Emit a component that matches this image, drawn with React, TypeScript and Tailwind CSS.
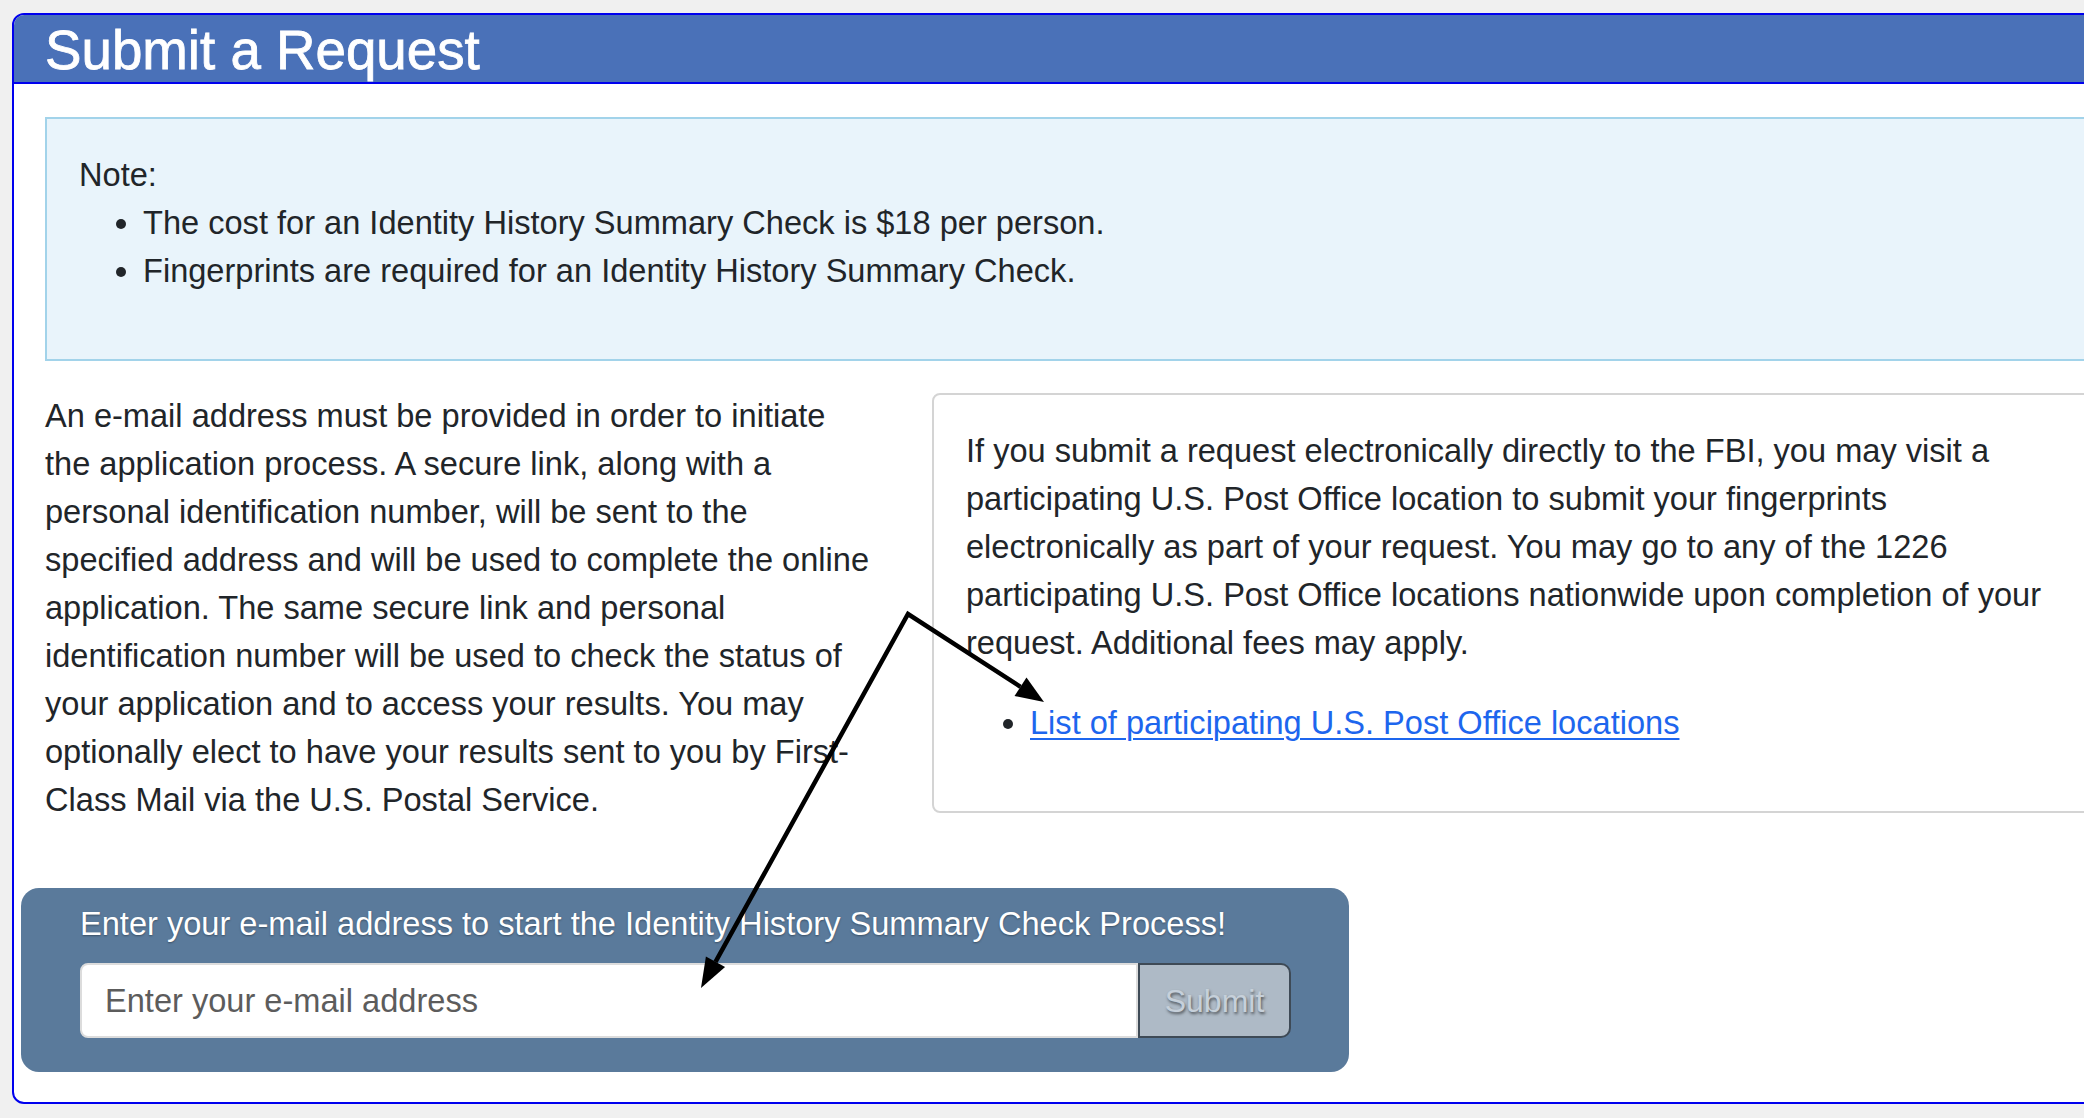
import React from "react";

const leftLines = [
  "An e-mail address must be provided in order to initiate",
  "the application process. A secure link, along with a",
  "personal identification number, will be sent to the",
  "specified address and will be used to complete the online",
  "application. The same secure link and personal",
  "identification number will be used to check the status of",
  "your application and to access your results. You may",
  "optionally elect to have your results sent to you by First-",
  "Class Mail via the U.S. Postal Service.",
];

const cardLines = [
  "If you submit a request electronically directly to the FBI, you may visit a",
  "participating U.S. Post Office location to submit your fingerprints",
  "electronically as part of your request. You may go to any of the 1226",
  "participating U.S. Post Office locations nationwide upon completion of your",
  "request. Additional fees may apply.",
];

export default function App() {
  return (
    <div className="relative w-[2084px] h-[1118px] overflow-hidden bg-[#f0f0f0] font-['Liberation_Sans',Arial,sans-serif] text-[#212529]">
      <div className="ml-[12px] mt-[13px] w-[2300px] border-2 border-[#0000ee] rounded-[12px] overflow-hidden bg-white">
        <div className="bg-[#4a71b8] border-b-2 border-[#0000ee] pl-[31px] pt-[8px] pb-[5px]">
          <h1 className="text-[54.7px] leading-[54px] text-white [-webkit-text-stroke:0.8px_#ffffff]">
            Submit a Request
          </h1>
        </div>
        <div className="pl-[31px] pt-[33px] pb-[30px]">
          <div className="border-2 border-[#a2d3ea] bg-[#e9f4fb] p-[32px] text-[32.6px] leading-[48px]">
            <div>Note:</div>
            <ul className="list-disc pl-[64px] mb-[32px]">
              <li>The cost for an Identity History Summary Check is $18 per person.</li>
              <li>Fingerprints are required for an Identity History Summary Check.</li>
            </ul>
          </div>
          <div className="flex mt-[31px]">
            <div className="w-[887px] shrink-0 text-[32.6px] leading-[48px]">
              {leftLines.map((l, i) => (
                <div key={i} className="whitespace-nowrap">{l}</div>
              ))}
            </div>
            <div className="mt-[1px] w-[1300px] shrink-0 self-start border-2 border-[#d4d4d4] rounded-[8px] p-[32px] text-[32.6px] leading-[48px]">
              <div className="mb-[32px]">
                {cardLines.map((l, i) => (
                  <div key={i} className="whitespace-nowrap">{l}</div>
                ))}
              </div>
              <ul className="list-disc pl-[64px] mb-[32px]">
                <li>
                  <a href="#" className="text-[#1d66ee] underline underline-offset-[4px] decoration-[2px]">
                    List of participating U.S. Post Office locations
                  </a>
                </li>
              </ul>
            </div>
          </div>
          <div className="-ml-[24px] mt-[64px] w-[1328px] h-[184px] rounded-[18px] bg-[#5a7a9b] pl-[59px] pt-[13px]">
            <div className="text-[32.6px] leading-[45px] text-white whitespace-nowrap [text-shadow:0_1px_2px_rgba(0,0,0,0.35)]">
              Enter your e-mail address to start the Identity History Summary Check Process!
            </div>
            <div className="flex mt-[17px]">
              <input
                type="text"
                placeholder="Enter your e-mail address"
                className="w-[1058px] h-[75px] border-2 border-[#dcdcdc] rounded-l-[8px] bg-white pl-[23px] text-[32.6px] text-[#333] placeholder:text-[#5c5c5c] outline-none"
              />
              <button className="w-[153px] h-[75px] border-2 border-[#3e4a56] rounded-r-[10px] bg-[#aebac6] text-[32px] text-[#c6d0da] [text-shadow:1px_2px_3px_rgba(0,0,0,0.55)]">
                Submit
              </button>
            </div>
          </div>
        </div>
      </div>
      <svg className="absolute left-0 top-0 pointer-events-none" width="2084" height="1118" viewBox="0 0 2084 1118">
        <polyline points="1020.5,686.8 908,614 715.5,961.8" fill="none" stroke="#000" strokeWidth="4.5" strokeLinejoin="miter" />
        <polygon points="1044,702 1014.5,696 1026.5,677.6" fill="#000" />
        <polygon points="701,988 725.1,967.1 705.9,956.4" fill="#000" />
      </svg>
    </div>
  );
}
